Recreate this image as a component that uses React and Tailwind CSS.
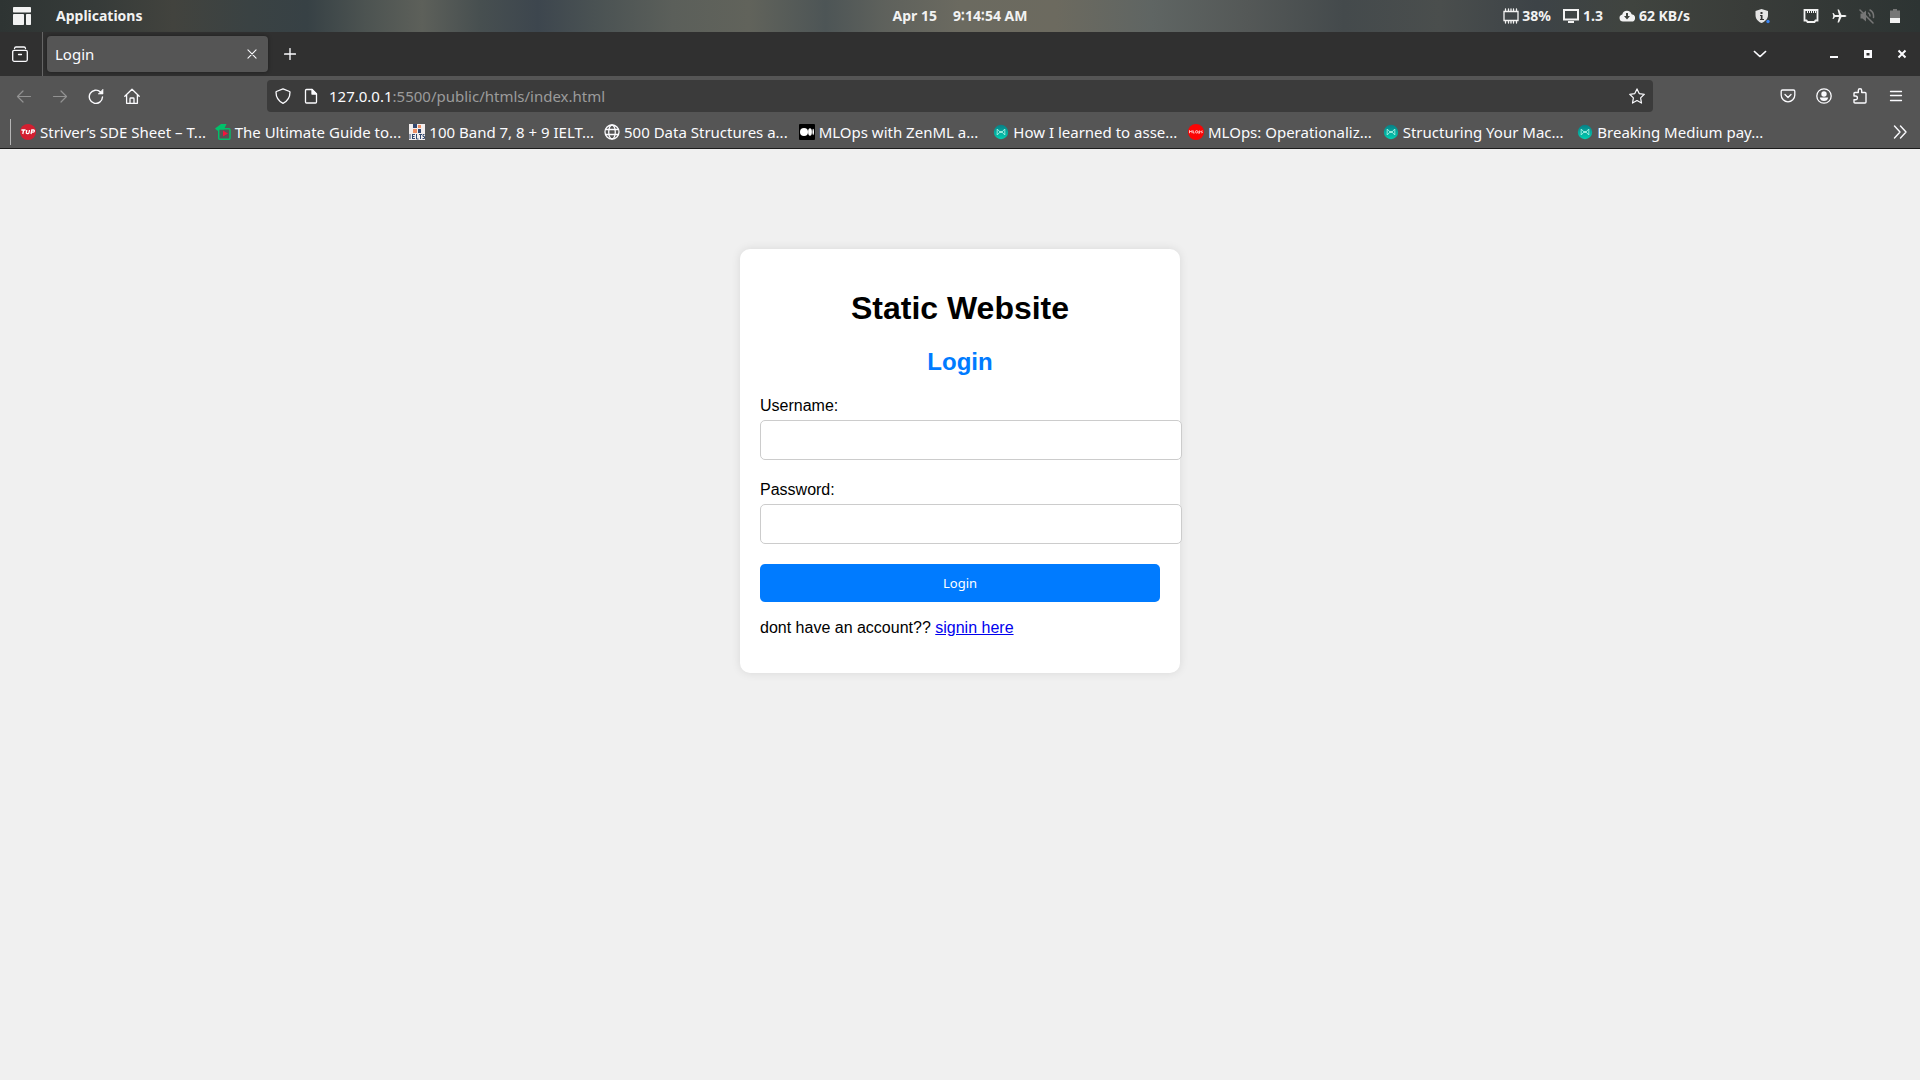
const medium = (
  <svg viewBox="0 0 16 16" className="size-4 shrink-0" aria-hidden="true">
    <rect width="16" height="16" rx="1" fill="#000" />
    <circle cx="5" cy="8" r="4" fill="#fff" />
    <ellipse cx="11" cy="8" rx="1.9" ry="3.7" fill="#fff" />
    <ellipse cx="14.2" cy="8" rx="0.8" ry="3.2" fill="#fff" />
  </svg>
);

const tuf = (
  <svg viewBox="0 0 16 16" className="size-4 shrink-0" aria-hidden="true">
    <circle cx="8" cy="8" r="8" fill="#d41f30" />
    <path d="M1.4 6h4.2M3.6 6l-.8 4M6.8 6l-.5 2.6q-.1 1.1 1 1.1h.5q1 0 1.2-1.1L9.5 6M11 10l.8-4h1.7q1.1.1.8 1.2-.3 1-1.4 1H11.6" stroke="#fff" strokeWidth="1.3" fill="none" />
  </svg>
);

const guide = (
  <svg viewBox="0 0 16 16" className="size-4 shrink-0" aria-hidden="true">
    <rect x="3.7" y="4.7" width="11.3" height="10.5" rx="1" fill="none" stroke="#00c16a" strokeWidth="1.4" />
    <path d="M0 4.5 6 0h5.5L9 5.5H4L3 7 1 5.500z" fill="#00c16a" />
    <path d="M8 6.5v6l5-3z" fill="#f5123c" />
  </svg>
);

const ielts = (
  <svg viewBox="0 0 16 16" className="size-4 shrink-0" aria-hidden="true">
    <rect width="16" height="16" fill="#f3eeee" />
    <path d="M4 0h4v4H4zM9 5h3v4H9z" fill="#32486f" />
    <path d="M9 1h3v3H9zM4 5h4v4H4z" fill="#ee8d62" />
    <path d="M1 10v5M3.5 10v5M3.5 10.5h2.5M3.5 12.5h2M3.5 14.5h2.5M7.5 10v5h2M10 10.5h3M11.5 10.5V15M15.5 10.5h-1.5v2h1.5v2h-2" stroke="#32486f" fill="none" />
  </svg>
);

const globe = (
  <svg viewBox="0 0 16 16" className="size-4 shrink-0" fill="none" stroke="#fbfbfe" strokeWidth="1.3" aria-hidden="true">
    <circle cx="8" cy="8" r="7" />
    <ellipse cx="8" cy="8" rx="3.3" ry="7" />
    <path d="M1.5 5.5h13M1.5 10.5h13" />
  </svg>
);

const freedium = (
  <svg viewBox="0 0 16 16" className="size-4 shrink-0" aria-hidden="true">
    <defs>
      <linearGradient id="teal" x1="0" y1="0" x2="0" y2="1">
        <stop offset="0" stopColor="#087f86" />
        <stop offset="1" stopColor="#02d0b2" />
      </linearGradient>
    </defs>
    <circle cx="8" cy="8" r="7.200" fill="url(#teal)" />
    <path d="M4.200 11V5L8 9l3.800-4v6L8 7z" fill="none" stroke="#a5f3e4" strokeWidth="0.9" />
  </svg>
);

const mlops = (
  <svg viewBox="0 0 16 16" className="size-4 shrink-0" aria-hidden="true">
    <circle cx="8" cy="8" r="8" fill="#fb0505" />
    <path d="M1.5 9.2V6.500L2.800 8 4 6.500v2.700M5.200 6.500v2.500h1.400M7.500 7.800a1.100 1.200 0 1 0 2.300 0 1.100 1.200 0 1 0-2.300 0M11 10V7q1.500-.3 1.300.8-.2.900-1.300.7M14.500 6.800q-1.200 0-1 .7l.9.500q.2.900-1.100.8" stroke="#ffd5d5" strokeWidth="0.9" fill="none" />
  </svg>
);

const bookmarks = [
  [tuf, "Striver’s SDE Sheet – T..."],
  [guide, "The Ultimate Guide to..."],
  [ielts, "100 Band 7, 8 + 9 IELT..."],
  [globe, "500 Data Structures a..."],
  [medium, "MLOps with ZenML a..."],
  [freedium, "How I learned to asse..."],
  [mlops, "MLOps: Operationaliz..."],
  [freedium, "Structuring Your Mac..."],
  [freedium, "Breaking Medium pay..."],
];

function Icon({ children, className = "size-4", ...rest }) {
  return (
    <svg
      viewBox="0 0 16 16"
      className={`shrink-0 ${className}`}
      fill="none"
      stroke="currentColor"
      strokeWidth="1.2"
      strokeLinecap="round"
      strokeLinejoin="round"
      aria-hidden="true"
      {...rest}
    >
      {children}
    </svg>
  );
}

function SystemBar() {
  return (
    <header className="grid h-8 grid-cols-[1fr_auto_1fr] items-center bg-[linear-gradient(90deg,#2e3433_0%,#363b39_5%,#42433e_9%,#3a4243_13%,#374145_16%,#4c5351_19%,#5d605a_22%,#474f50_25%,#3d464e_28%,#4a5253_31%,#5b5f5a_35%,#61635b_39%,#4d5556_43%,#5e615c_46%,#6b6a60_50%,#6c6a5f_55%,#5f6563_60%,#545857_65%,#444a4c_70%,#4a4e4d_75%,#3d4347_80%,#40443f_85%,#393c39_91%,#2d3433_100%)] text-sm leading-5 font-bold text-[#f2f2f2]">
      <div className="flex items-center gap-[25px] pl-[13px]">
        <svg viewBox="0 0 18 18" className="size-[18px]" fill="currentColor" aria-hidden="true">
          <rect width="18" height="5.5" rx="0.7" />
          <rect y="7" width="11" height="11" rx="0.7" />
          <rect x="13" y="7" width="5" height="11" rx="0.7" />
        </svg>
        <button type="button">Applications</button>
      </div>
      <div className="flex gap-4">
        <span>Apr 15</span>
        <span>9∶14∶54 AM</span>
      </div>
      <div className="flex items-center justify-end pr-[17px]">
        <div className="flex items-center gap-[3px]">
          <Icon strokeWidth="1.3" strokeLinejoin="miter">
            <path d="M1 3.5h14v9H1z" />
            <path d="M2.5 1v2M5.5 1v2M8 1v2M10.5 1v2M13.5 1v2M2.5 13v2M5.5 13v2M8 13v2M10.5 13v2M13.5 13v2" />
          </Icon>
          <span>38%</span>
        </div>
        <div className="ml-3 flex items-center gap-1">
          <Icon strokeWidth="2" strokeLinejoin="miter" strokeLinecap="butt">
            <path d="M1 2h14v9.5H1zM5 14h6" />
          </Icon>
          <span>1.3</span>
        </div>
        <div className="ml-4 flex items-center gap-1">
          <Icon stroke="none" fill="currentColor">
            <path d="M4 13.5a3.6 3.6 0 0 1-.7-7.1A4.8 4.8 0 0 1 12.6 6.3 3.6 3.6 0 0 1 12.4 13.5z" />
            <path d="M7 5h2v3h2l-3 3.500L5 8h2z" fill="#40443f" />
          </Icon>
          <span>62 KB/s</span>
        </div>
        <Icon className="ml-16 size-4" stroke="none" fill="#e4e4e4">
          <path d="M7.5 1 14 3v4c0 4-3 6.500-6.500 8C4 13.500 1.500 11 1.500 7V3z" />
          <path d="M6.500 4h2v2h-2zM6 7h2.500v4H10v1H6v-1h.8V8H6z" fill="#333" />
          <circle cx="14" cy="13.5" r="1.7" fill="#3a84f0" />
        </Icon>
        <Icon className="ml-[33px] size-4" strokeWidth="1.8" strokeLinecap="butt" strokeLinejoin="miter">
          <path d="M1.5 2h13v10.500h-2l-1 1.500h-7l-1-1.500h-2z" />
          <path d="M4.500 2v3M6.500 2v3M8.500 2v3M10.500 2v3M12.500 2v3" strokeWidth="1" />
        </Icon>
        <Icon className="ml-3 size-4" stroke="none" fill="currentColor">
          <path d="M6.500 1.500H8L10.500 7h3.500q1.500.3 1.500 1t-1.500 1h-3.500L8 14.500H6.500L8 9H4L2.500 11H1.500L2.300 8 1.500 5h1L4 7h4z" />
        </Icon>
        <Icon className="ml-3 size-4 text-[#777]" strokeWidth="1.5">
          <path d="M1.500 5.500h2L7 2.500v11L3.500 10.500h-2z" fill="currentColor" stroke="none" />
          <path d="m1 2 13 13M9.500 5q1.500 1 1.500 3M11 2q4 2 3.500 7.500" />
        </Icon>
        <Icon className="ml-3 size-4" stroke="none" fill="currentColor">
          <path d="M3 2.500h3V1h4v1.500h3V10H3z" fill="#777" />
          <path d="M3 10h10v5H3z" />
        </Icon>
      </div>
    </header>
  );
}

function TabStrip() {
  return (
    <div className="flex h-11 items-center bg-[#303030]">
      <button type="button" aria-label="Recent tabs" className="flex h-full w-[43px] items-center justify-center border-r border-[#666] pr-[3px]">
        <Icon strokeWidth="1.3">
          <rect x="0.7" y="4.3" width="14.6" height="11" rx="1.5" />
          <path d="M2.5 2.5q.2-1.500 1.500-1.500h8q1.300 0 1.500 1.500M6.500 8.500h3" />
        </Icon>
      </button>
      <div className="ml-1 flex h-9 w-[221px] items-center justify-between rounded bg-[#555] pr-[11px] pl-2 shadow-[0_0_4px_rgba(0,0,0,0.4)]">
        <span className="text-[15px] leading-5">Login</span>
        <button type="button" aria-label="Close tab">
          <Icon className="size-[10px]" strokeWidth="1.7"><path d="m1.500 1.500 13 13M14.500 1.500l-13 13" /></Icon>
        </button>
      </div>
      <button type="button" aria-label="New tab" className="ml-4">
        <Icon className="size-3" strokeWidth="1.8"><path d="M8 .8v14.400M.8 8h14.400" /></Icon>
      </button>
      <div className="ml-auto flex items-center pr-[13px]">
        <button type="button" aria-label="List tabs" className="mr-[62px]">
          <Icon className="size-[14px]" strokeWidth="1.6"><path d="m1.500 5 6.500 6 6.500-6" /></Icon>
        </button>
        <div className="flex items-center gap-6">
          <button type="button" aria-label="Minimize">
            <Icon className="size-[10px]" viewBox="0 0 10 10" stroke="none" fill="currentColor"><path d="M1 7h8v2H1z" /></Icon>
          </button>
          <button type="button" aria-label="Maximize">
            <Icon className="size-[10px]" viewBox="0 0 10 10" stroke="none" fill="currentColor"><path fillRule="evenodd" d="M1 1h8v8H1zM3.500 4v2.500h3V4z" /></Icon>
          </button>
          <button type="button" aria-label="Close">
            <Icon className="size-[10px]" viewBox="0 0 10 10" strokeWidth="2" strokeLinecap="butt"><path d="m1.500 1.500 7 7M8.500 1.500l-7 7" /></Icon>
          </button>
        </div>
      </div>
    </div>
  );
}

function NavBar() {
  return (
    <div className="flex h-10 items-center bg-[#555] px-4">
      <div className="flex w-[251px] items-center gap-5">
        <button type="button" aria-label="Back" className="text-[#929292]">
          <Icon><path d="M14.500 8.500H1.500M7 3 1.500 8.500 7 14" /></Icon>
        </button>
        <button type="button" aria-label="Forward" className="text-[#929292]">
          <Icon><path d="M1.500 8.500h13M9 3l5.500 5.500L9 14" /></Icon>
        </button>
        <button type="button" aria-label="Reload">
          <Icon strokeWidth="1.4"><path d="M14.500 9A6.600 6.600 0 1 1 12.500 4L14 5.200" /><path d="M15 1.500V6h-4.500z" fill="currentColor" strokeWidth="0.6" /></Icon>
        </button>
        <button type="button" aria-label="Home">
          <Icon strokeWidth="1.3"><path d="M.8 8.200 8 1.200l7.200 7M2.600 7v8.300h10.800V7M6 15v-4.200q0-.8.800-.8h2.400q.8 0 .8.800V15" /></Icon>
        </button>
      </div>
      <div className="flex h-8 flex-1 items-center rounded bg-[#3b3b3b] px-2">
        <button type="button" aria-label="Tracking protection" className="mr-3">
          <Icon strokeWidth="1.3"><path d="M8 .8 14.600 3.500q.4.200.4.600C15 10 12 13.500 8 15.300 4 13.500 1 10 1 4.100q0-.4.400-.6z" /></Icon>
        </button>
        <button type="button" aria-label="Site information" className="mr-[10px]">
          <Icon strokeWidth="1.3"><path d="M3.500 1.500h5.500l4.500 4.500v8q0 1-1 1h-9q-1 0-1-1v-11.500q0-1 1-1z" /><path d="M9 1.500V6h4.500z" fill="currentColor" /></Icon>
        </button>
        <div className="relative flex-1 text-[15px] leading-6">
          <input aria-label="Address" defaultValue="127.0.0.1:5500/public/htmls/index.html" className="block w-full bg-transparent text-transparent outline-none" />
          <span aria-hidden="true" className="pointer-events-none absolute inset-0 text-[#9b9b9b]">
            <span className="text-[#fbfbfe]">127.0.0.1</span>:5500/public/htmls/index.html
          </span>
        </div>
        <button type="button" aria-label="Bookmark this page">
          <Icon><path d="m8 .9 2.200 4.700 5.100.7-3.700 3.600.9 5.200L8 12.600l-4.500 2.500.9-5.200L.7 6.300l5.100-.7z" /></Icon>
        </button>
      </div>
      <div className="ml-[127px] flex items-center gap-5">
        <button type="button" aria-label="Save to Pocket">
          <Icon strokeWidth="1.3"><path d="M2.500 2h11q1.300 0 1.300 1.300V7a6.800 6.800 0 0 1-13.600 0V3.300Q1.200 2 2.500 2zM5 6.500l3 3 3-3" /></Icon>
        </button>
        <button type="button" aria-label="Account">
          <Icon strokeWidth="1.3"><circle cx="8" cy="8" r="7.2" /><circle cx="8" cy="6" r="2.7" fill="currentColor" stroke="none" /><path d="M3.800 9.500h8.400q-.6 3.500-4.200 3.500T3.800 9.500z" fill="currentColor" stroke="none" /></Icon>
        </button>
        <button type="button" aria-label="Extensions">
          <Icon strokeWidth="1.4"><path d="M2 8V5.500q0-1 1-1h3.300V2.400a1.700 1.700 0 0 1 3.400 0v2.100H13q1 0 1 1V14q0 1-1 1H3q-1 0-1-1v-2.200h1.500a1.900 1.900 0 0 0 0-3.800z" /></Icon>
        </button>
        <button type="button" aria-label="Menu">
          <Icon strokeWidth="1.3"><path d="M2.500 3.500h11M2.500 7.500h11M2.500 12.500h11" /></Icon>
        </button>
      </div>
    </div>
  );
}

function BookmarksBar() {
  return (
    <nav className="flex h-[33px] items-center border-b border-[#1c1c1c] bg-[#555] pl-[10px]">
      <div className="mr-[9px] h-[26px] w-px bg-[#b5b5b5]" />
      <div className="grid flex-1 grid-cols-9">
        {bookmarks.map(([icon, title]) => (
          <a key={title} href="#" className="flex items-center gap-1 text-[15px] leading-5 whitespace-nowrap">
            {icon}
            {title}
          </a>
        ))}
      </div>
      <button type="button" aria-label="More bookmarks" className="mr-3 ml-[120px]">
        <Icon strokeWidth="1.4"><path d="m2.500 2 5.500 6-5.500 6M8.500 2l5.500 6-5.500 6" /></Icon>
      </button>
    </nav>
  );
}

function Field({ id, label, type }) {
  return (
    <div className="mb-5">
      <label htmlFor={id} className="mb-1 block">{label}</label>
      <input id={id} type={type} className="box-content block h-[18px] w-full rounded-[5px] border border-[#ccc] bg-white p-[10px] outline-none" />
    </div>
  );
}

function LoginCard() {
  return (
    <main className="mx-auto mt-[100px] w-[440px] rounded-[10px] bg-white px-5 pt-[41px] pb-[35px] font-['Liberation_Sans',Arial,sans-serif] text-base leading-5 text-black shadow-[0_0_10px_rgba(0,0,0,0.1)]">
      <h1 className="mb-[21px] text-center text-[32px] leading-[37px] font-bold">Static Website</h1>
      <h2 className="mb-5 text-center text-2xl leading-7 font-bold text-[#007bff]">Login</h2>
      <form onSubmit={(event) => event.preventDefault()}>
        <Field id="username" label="Username:" type="text" />
        <Field id="password" label="Password:" type="password" />
        <button type="submit" className="block w-full rounded-[5px] bg-[#007bff] p-[10px] font-['Noto_Sans',sans-serif] text-[13px] leading-[18px] text-white">
          Login
        </button>
      </form>
      <p className="mt-4">
        dont have an account??{" "}
        <a href="#" className="text-[#0000ee] underline">signin here</a>
      </p>
    </main>
  );
}

export default function App() {
  return (
    <div className="min-h-screen bg-[#f0f0f0] font-['Noto_Sans',sans-serif] text-[#fbfbfe]">
      <SystemBar />
      <TabStrip />
      <NavBar />
      <BookmarksBar />
      <LoginCard />
    </div>
  );
}
